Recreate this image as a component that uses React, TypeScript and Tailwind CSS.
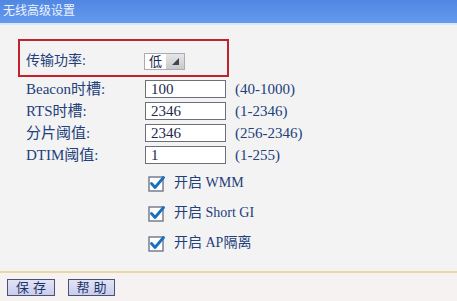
import React from "react";

const font = { fontFamily: '"Liberation Serif", "Noto Sans CJK SC", serif' };

function Check() {
  return (
    <svg width="17" height="17" viewBox="0 0 17 17" className="shrink-0">
      <rect x="1" y="2" width="14" height="14" fill="#ffffff" stroke="#6f7689" strokeWidth="1.4" />
      <path d="M3.5 8.5 L7 12.5 L15.5 2.5" fill="none" stroke="#1a6fbf" strokeWidth="2.8" strokeLinecap="round" strokeLinejoin="round" />
    </svg>
  );
}

function Row({ label, value, range }: { label: string; value: string; range: string }) {
  return (
    <div className="flex h-[22px] items-center pl-[26px]">
      <div className="w-[119px] text-[15px] leading-none">{label}</div>
      <div className="flex h-[18px] w-[81px] items-center border border-[#6c6f78] bg-white pl-[5px] text-[15px] leading-none text-[#1b2a4a]">
        {value}
      </div>
      <div className="ml-[9px] text-[15px] leading-none">{range}</div>
    </div>
  );
}

function CheckRow({ label }: { label: string }) {
  return (
    <div className="flex h-[30px] items-center pl-[148px]">
      <Check />
      <span className="ml-[9px] text-[14px] leading-none">{label}</span>
    </div>
  );
}

export default function App() {
  return (
    <div className="flex h-[301px] w-[457px] flex-col overflow-hidden bg-[#f3f3f3] text-[#22407a]" style={font}>
      <div className="h-[23px] bg-gradient-to-b from-[#5087e2] to-[#6499ee] pl-[3px] text-[12px] leading-[23px] text-[#eef3ff]">
        无线高级设置
      </div>
      <div className="h-[2px] bg-[#dde6f4]" />
      <div className="ml-[18px] mt-[14px] flex h-[38px] w-[211px] items-center border-2 border-[#c4222b] pl-[6px] pt-[6px]">
        <div className="w-[118px] text-[14px] leading-none">传输功率:</div>
        <div className="flex h-[17px] w-[41px] border border-[#a9acb4] bg-white">
          <div className="flex w-[21px] items-center justify-center text-[13px] leading-none text-[#1b2a4a]">低</div>
          <div className="relative flex-1 bg-gradient-to-b from-[#e6e6e6] to-[#c9c9c9]">
            <svg width="19" height="15" viewBox="0 0 19 15" className="absolute left-0 top-0">
              <path d="M13 4 L13 11 L6 11 Z" fill="#3d4452" />
            </svg>
          </div>
        </div>
      </div>
      <div className="mt-[1px]">
        <Row label="Beacon时槽:" value="100" range="(40-1000)" />
        <Row label="RTS时槽:" value="2346" range="(1-2346)" />
        <Row label="分片阈值:" value="2346" range="(256-2346)" />
        <Row label="DTIM阈值:" value="1" range="(1-255)" />
      </div>
      <div className="mt-[2px]">
        <CheckRow label="开启 WMM" />
        <CheckRow label="开启 Short GI" />
        <CheckRow label="开启 AP隔离" />
      </div>
      <div className="mt-[13px] h-[2px] bg-[#ecd6a4]" />
      <div className="flex flex-1 items-start gap-[13px] bg-[#f6f2f1] pl-[7px] pt-[6px]">
        <div className="flex h-[17px] w-[48px] items-center justify-center border border-[#4a5272] bg-gradient-to-b from-[#e2e4f6] to-[#c9cdec] text-[13px] leading-none tracking-[4px] text-[#1f3466]">
          <span className="pl-[4px]">保存</span>
        </div>
        <div className="flex h-[17px] w-[47px] items-center justify-center border border-[#4a5272] bg-gradient-to-b from-[#e2e4f6] to-[#c9cdec] text-[13px] leading-none tracking-[4px] text-[#1f3466]">
          <span className="pl-[4px]">帮助</span>
        </div>
      </div>
    </div>
  );
}
